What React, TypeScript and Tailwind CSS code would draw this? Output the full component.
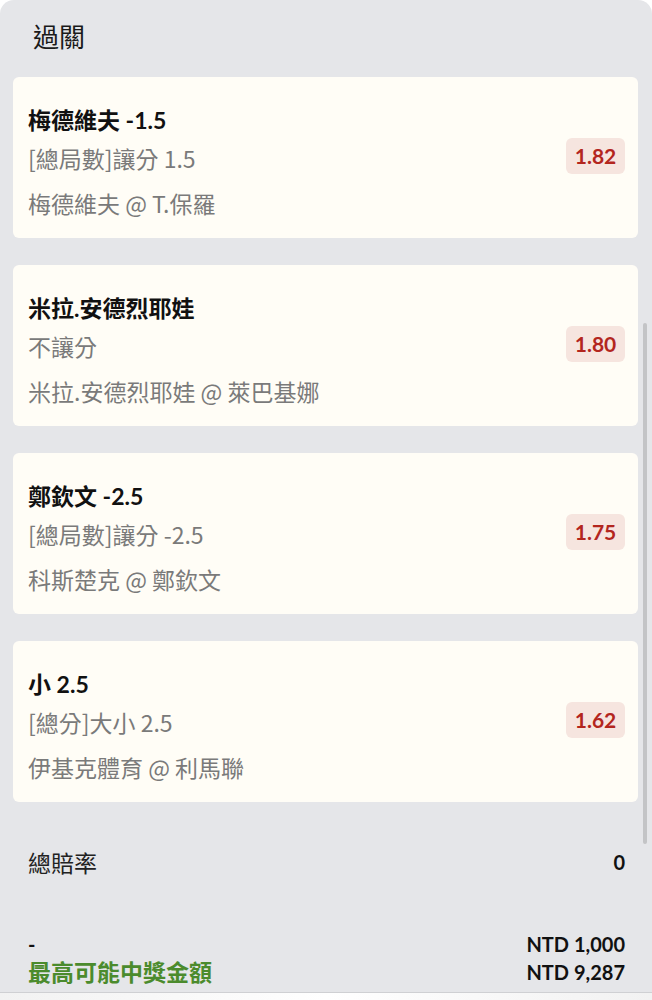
const font = { fontFamily: "Lato, 'Noto Sans CJK TC', sans-serif" };
const cjk = { fontFamily: "'Noto Sans CJK TC', sans-serif" };

const bets = [
  { title: "梅德維夫 -1.5", market: "[總局數]讓分 1.5", match: "梅德維夫 @ T.保羅", odds: "1.82" },
  { title: "米拉.安德烈耶娃", market: "不讓分", match: "米拉.安德烈耶娃 @ 萊巴基娜", odds: "1.80" },
  { title: "鄭欽文 -2.5", market: "[總局數]讓分 -2.5", match: "科斯楚克 @ 鄭欽文", odds: "1.75" },
  { title: "小 2.5", market: "[總分]大小 2.5", match: "伊基克體育 @ 利馬聯", odds: "1.62" },
];

function BetCard({ title, market, match, odds }: (typeof bets)[number]) {
  return (
    <div className="flex items-center justify-between rounded-md bg-[#fffdf6] pl-[15px] pr-[13px] h-[161px]">
      <div className="flex flex-col pt-[8px]">
        <div className="text-[23px] leading-[28px] font-bold text-[#111]">{title}</div>
        <div className="mt-[10px] text-[23px] leading-[28px] text-[#7a7a7a]" style={cjk}>
          {market}
        </div>
        <div className="mt-[17px] text-[23px] leading-[28px] text-[#7a7a7a]" style={cjk}>
          {match}
        </div>
      </div>
      <div className="mt-[-4px] flex h-[36px] w-[59px] items-center justify-center rounded-md bg-[#f6e5df] text-[21px] font-bold text-[#b3261e]">
        {odds}
      </div>
    </div>
  );
}

export default function App() {
  return (
    <div className="h-[1000px] w-[652px] overflow-hidden bg-white" style={font}>
      <div className="relative flex h-[992px] flex-col rounded-t-[14px] bg-[#e5e6e9]">
        {/* scrollbar */}
        <div className="absolute right-[5px] top-[323px] h-[521px] w-[4px] rounded-full bg-[#c3c4c6]" />

        <div className="pl-[33px] pt-[19px] text-[26px] leading-[36px] text-[#1a1a1a]">過關</div>

        <div className="mt-[22px] flex flex-col gap-[27px] pl-[13px] pr-[14px]">
          {bets.map((b) => (
            <BetCard key={b.odds} {...b} />
          ))}
        </div>

        <div className="mt-[46px] flex items-center justify-between pl-[28px] pr-[27px] text-[20px] leading-[28px]">
          <span className="text-[23px] text-[#222]" style={cjk}>
            總賠率
          </span>
          <span className="font-bold text-[#111]">0</span>
        </div>

        <div className="mt-[54px] flex flex-col pl-[28px] pr-[27px]">
          <div className="flex items-center justify-between text-[20px] leading-[28px]">
            <span className="font-bold text-[#111]">-</span>
            <span className="font-bold text-[#111]">NTD 1,000</span>
          </div>
          <div className="flex items-center justify-between text-[20px] leading-[28px]">
            <span className="text-[23px] font-bold text-[#4b8b2d]">最高可能中獎金額</span>
            <span className="font-bold text-[#111]">NTD 9,287</span>
          </div>
        </div>
      </div>
      <div className="h-[8px] border-t border-[#cfd0d3] bg-gradient-to-r from-[#f2f2f2] via-white to-[#f2f2f2]" />
    </div>
  );
}
